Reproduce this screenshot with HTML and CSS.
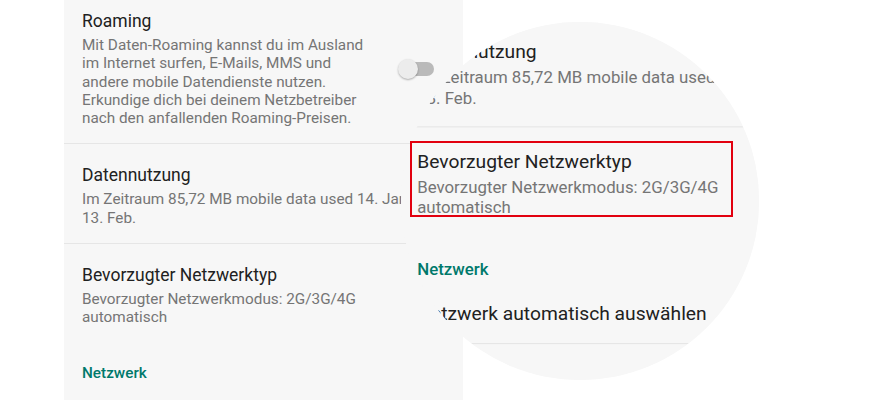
FILE: index.html
```html
<!DOCTYPE html>
<html lang="de">
<head>
	<meta charset="UTF-8">
	<title>Mobilfunknetz</title>
	<link rel="stylesheet" href="styles.css">
</head>
<body>
	<div class="panel">
		<div class="pref line">
			<div class="pref-text">
				<div class="pref-title">Roaming</div>
				<div class="pref-summary">Mit Daten-Roaming kannst du im Ausland<br>im Internet surfen, E-Mails, MMS und<br>andere mobile Datendienste nutzen.<br>Erkundige dich bei deinem Netzbetreiber<br>nach den anfallenden Roaming-Preisen.</div>
			</div>
			<span class="switch"></span>
		</div>
		<div class="pref line">
			<div class="pref-text">
				<div class="pref-title">Datennutzung</div>
				<div class="pref-summary">Im Zeitraum 85,72 MB mobile data used 14. Jan. –<br>13. Feb.</div>
			</div>
		</div>
		<div class="pref">
			<div class="pref-text">
				<div class="pref-title">Bevorzugter Netzwerktyp</div>
				<div class="pref-summary">Bevorzugter Netzwerkmodus: 2G/3G/4G<br>automatisch</div>
			</div>
		</div>
		<div class="category">Netzwerk</div>
		<div class="pref line">
			<div class="pref-text">
				<div class="pref-title">Netzwerk automatisch auswählen</div>
			</div>
			<span class="switch on"></span>
		</div>
	</div>

	<!-- magnifier: same list, 1.1x -->
	<div class="lens">
		<div class="lens-view">
			<div class="panel">
				<div class="pref line">
					<div class="pref-text">
						<div class="pref-title">Roaming</div>
						<div class="pref-summary">Mit Daten-Roaming kannst du im Ausland<br>im Internet surfen, E-Mails, MMS und<br>andere mobile Datendienste nutzen.<br>Erkundige dich bei deinem Netzbetreiber<br>nach den anfallenden Roaming-Preisen.</div>
					</div>
					<span class="switch"></span>
				</div>
				<div class="pref line">
					<div class="pref-text">
						<div class="pref-title">Datennutzung</div>
						<div class="pref-summary">Im Zeitraum 85,72 MB mobile data used 14. Jan. –<br>13. Feb.</div>
					</div>
				</div>
				<div class="pref">
					<div class="pref-text">
						<div class="pref-title">Bevorzugter Netzwerktyp</div>
						<div class="pref-summary">Bevorzugter Netzwerkmodus: 2G/3G/4G<br>automatisch</div>
					</div>
				</div>
				<div class="category">Netzwerk</div>
				<div class="pref line">
					<div class="pref-text">
						<div class="pref-title">Netzwerk automatisch auswählen</div>
					</div>
					<span class="switch on"></span>
				</div>
			</div>
		</div>
	</div>
	<div class="mark"></div>
</body>
</html>
```
FILE: styles.css
```css
body{
	margin: 0;
	height: 400px;
	overflow: hidden;
	position: relative;
	background: #fff;
	font-family: Roboto, "Noto Sans", sans-serif;
}
.panel{
	width: 399px;
	min-height: 500px;
	margin: -10px 0 0 64px;
	background: #f7f7f7;
}
.pref{
	display: flex;
	align-items: center;
	padding: 20px 29px 16px 18px;
}
.pref.line{
	border-bottom: 1px solid #e6e6e6;
}
.pref-text{
	flex: 1;
	min-width: 0;
}
.pref-title{
	font-size: 17.5px;
	line-height: 22px;
	color: #212121;
}
.pref-summary{
	margin-top: 4px;
	font-size: 15.3px;
	line-height: 18.3px;
	color: #757575;
}
.category{
	padding: 21px 18px 0;
	font-size: 15.3px;
	line-height: 18.3px;
	font-weight: 500;
	color: #00796b;
}
.switch{
	position: relative;
	flex: none;
	width: 36px;
	height: 20px;
}
.switch:before{
	content: "";
	position: absolute;
	left: 3px;
	top: 3px;
	width: 33px;
	height: 14px;
	border-radius: 7px;
	background: #bababa;
}
.switch:after{
	content: "";
	position: absolute;
	left: 0;
	top: 0;
	width: 20px;
	height: 20px;
	border-radius: 50%;
	background: #ececec;
	box-shadow: 0 1px 2px rgba(0,0,0,0.3);
}
.switch.on:before{
	background: #80cbc4;
}
.switch.on:after{
	left: 16px;
	background: #009688;
}
.lens{
	position: absolute;
	left: 401px;
	top: 22px;
	width: 358px;
	height: 358px;
	border-radius: 50%;
	overflow: hidden;
	background: #f7f7f7;
}
.lens-view{
	position: absolute;
	left: -74.2px;
	top: -163.3px;
	width: 463px;
	transform: scale(1.1);
	transform-origin: 0 0;
}
.mark{
	position: absolute;
	left: 410px;
	top: 141px;
	width: 323px;
	height: 76px;
	box-sizing: border-box;
	border: 2px solid #e2000f;
}
```
